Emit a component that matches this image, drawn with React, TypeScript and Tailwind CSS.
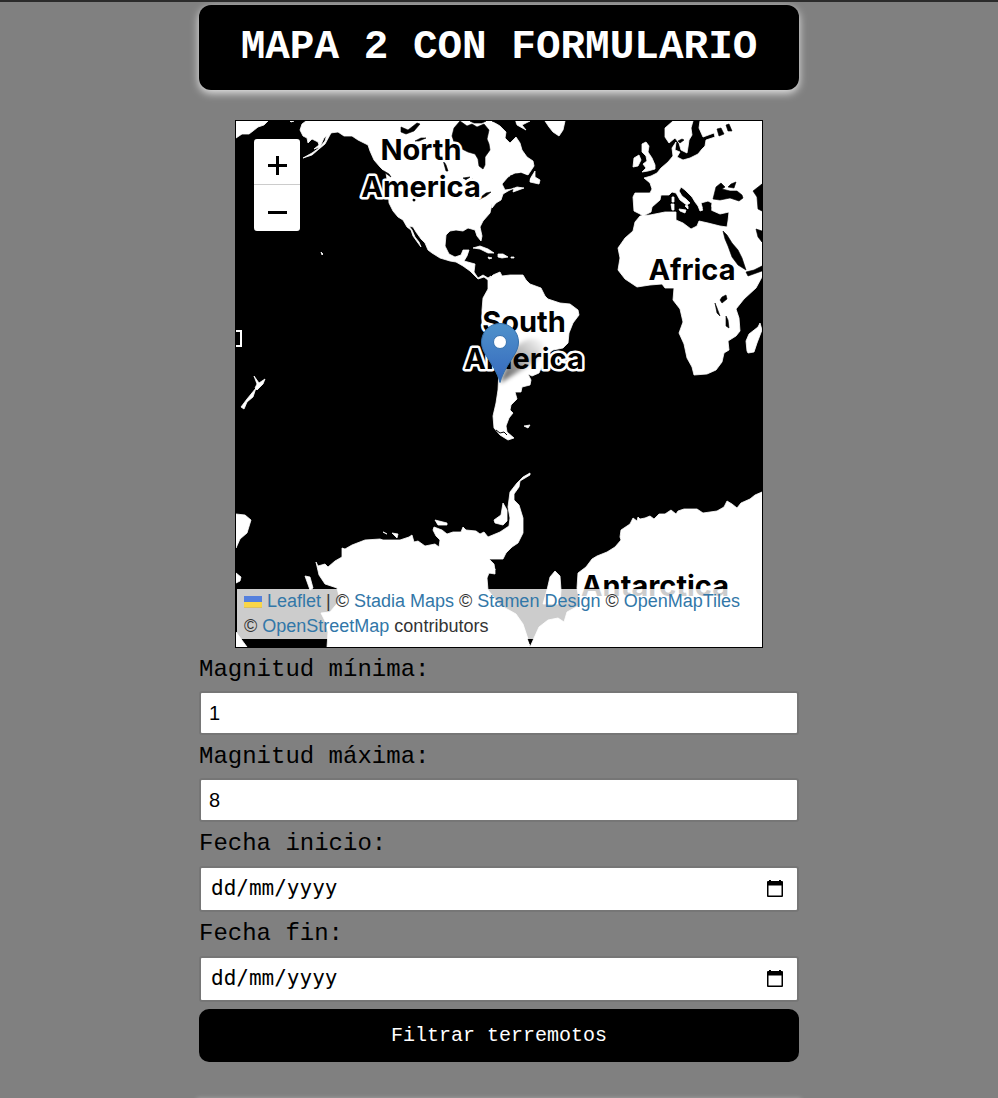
import React, { useState } from "react";

const LAND = [
  // Siberia, Alaska
  "M236 121H268L264 125 258 127 253 131 249 134 242 134 236 138Z",
  "M290 121H294L291 122Z",
  "M325 144L331 133 333 131 328 130 325 141 319 148 312 153 303 158 312 155 319 149Z",
  // North America
  "M306 121L302 124 300 130 303 136 307 138 308 143 312 139 318 142 319 145 314 149 320 147 324 138 330 133 338 132 344 136 352 136 358 140 364 143 368 145 370 151 374 160 380 167 386 173 388 185 389 203 393 211 398 217 403 220 407 227 411 230 413 236 418 243 421 247 419 242 415 237 412 230 409 226 413 227 416 232 421 239 425 243 428 250 432 253 440 258 450 261 456 262 463 266 470 271 474 275 478 279 484 277 488 280 491 276 488 278 483 275 478 278 474 272 475 264 464 261 467 256 469 250 463 250 461 255 455 257 449 254 445 246 446 235 450 231 456 230 463 231 468 228 475 230 477 236 481 241 482 236 480 227 483 221 490 213 492 204 492 208 496 203 501 200 503 194 508 191 514 188 513 192 524 188 517 187 512 189 505 190 502 184 508 177 515 173 521 173 528 175 534 166 533 161 527 157 522 150 520 143 516 137 513 140 510 143 505 138 506 132 500 126 492 121Z",
  "M530 179L535 171 535 177 540 180 539 184 530 182Z",
  "M514 121H530L522 125 526 130 517 125Z",
  "M545 121H565L563 130 559 136 553 132 549 127Z",
  // Caribbean
  "M473 248L480 246 488 249 494 253 488 253 480 249Z",
  "M498 254L503 254 508 257 502 258 498 257Z",
  "M511 257H514V258H511ZM488 257L492 258 489 259Z",
  "M321 252L323 254 322 255Z",
  // South America
  "M488 280L493 275 500 272 502 276 510 275 523 275 526 280 530 284 541 288 545 296 548 299 560 303 570 304 578 310 579 315 573 323 569 333 568 343 563 348 553 350 545 356 542 366 539 373 532 376 528 374 531 380 530 385 522 387 521 392 515 392 517 399 511 405 510 410 513 413 509 418 506 426 507 432 514 438 508 440 500 435 494 428 493 416 496 403 498 390 499 370 497 352 489 340 482 325 482 310 483 298 488 289Z",
  "M524 426L530 425 528 428Z",
  // Africa and Eurasia
  "M762 121H700L699 128 703 137 714 133 715 137 706 140 705 146 702 149 698 154 692 157 690 158 683 160 677 157 680 152 675 150 676 142 672 148 673 156 668 162 661 168 657 173 651 176 644 178 650 183 652 189 650 193 635 193 633 197 634 211 640 214 643 216 651 212 652 207 660 200 661 195 669 195 672 192 676 193 680 200 688 206 688 209 685 206 690 203 686 199 682 196 679 191 681 187 685 190 692 197 695 202 698 206 700 211 703 210 701 203 708 201 712 203 711 210 720 214 729 212 728 221 727 227 720 226 708 223 699 221 697 226 691 229 683 223 676 220 676 212 665 212 650 215 640 216 635 222 633 231 625 238 618 248 620 258 618 270 625 279 637 287 650 285 662 284 665 288 674 288 673 300 680 309 683 322 679 333 684 344 687 358 692 367 694 375 707 374 716 370 722 362 724 353 729 350 728 341 736 336 740 331 739 318 736 309 744 299 756 288 762 277Z",
  "M673 121L665 128 665 137 669 143 675 138 679 143 681 150 687 153 688 147 689 140 692 135 691 128 693 121Z",
  "M642 144L646 142 649 146 648 152 652 158 655 165 655 169 648 171 642 172 646 168 643 164 647 161 646 156 642 152Z",
  "M634 158L639 155 641 160 638 166 633 167Z",
  "M747 351L746 341 749 334 758 327 760 323 762 330 757 343 754 352 748 353Z",
  "M672 197H674V202H672ZM671 204H674V210H672ZM679 209L686 210 685 213 680 211Z",
  // New Zealand
  "M254 376L259 383 265 379 263 384 257 390 255 388 257 384Z",
  "M256 388L253 397 247 402 244 409 241 407 247 399Z",
  // Antarctica
  "M236 514L245 515 251 520 247 533 240 539 236 548Z",
  "M236 573L241 577 240 581 236 583Z",
  "M236 632L247 647H236Z",
  "M316 562L318 566 325 564 328 567 335 561 342 557 342 548 345 549 352 545 365 540 380 539 383 540 400 540 409 537 412 535 414 542 418 541 425 546 435 544 439 547 440 540 436 536 433 530 434 527 442 530 447 534 453 532 461 532 463 527 466 530 476 531 480 534 484 532 488 537 500 532 509 526 510 518 508 507 510 492 517 483 523 477 530 473 530 475 520 481 519 487 514 494 514 500 519 505 523 518 523 533 518 543 512 547 506 553 503 559 489 559 494 564 495 570 489 573 487 578 488 590 500 605 516 614 523 624 529 642 530 647H327L328 632 325 621 321 613 330 612 340 600 337 588 325 584 319 575Z",
  "M762 492L755 495 750 499 741 503 737 508 732 504 727 501 724 507 717 511 703 513 697 509 684 509 678 511 676 514 671 510 665 514 659 514 654 519 650 516 645 518 640 519 638 517 637 521 633 518 630 524 621 530 620 537 621 540 615 547 607 552 597 556 592 559 586 567 578 573 577 588 580 605 567 612 564 622 558 618 548 620 539 627 530 647H762Z",
  "M543 604L547 590 550 577 555 571 560 576 561 590 560 604Z",
  "M503 503L507 510 507 521 503 525 495 523 494 520 501 515Z",
  "M490 564L495 569 495 574 489 573Z",
  "M305 576L310 577 313 588 310 590Z",
  "M435 520L447 523 447 525 438 525ZM392 533L398 534 397 538ZM383 532L387 534Z",
];

const WATER = [
  // Hudson Bay and northern lakes
  "M460 121L454 128 452 136 455 145 462 149 468 152 475 154 478 159 479 166 483 169 485 165 485 157 490 150 489 144 487 139 489 130 484 124 477 127 472 124 467 126Z",
  "M470 121H486L482 123 474 123Z",
  "M492 121H515L517 128 508 129 502 125Z",
  "M401 127L408 130 417 123 420 124 414 131 406 134 401 132Z",
  "M415 141L421 138 426 138 419 141Z",
  "M443 160L446 165 448 171 446 171Z",
  "M463 178L470 177 466 180 472 188 475 184 473 179 468 181Z",
  "M475 198L481 197 486 193 491 192 486 196 480 199Z",
  "M381 170L391 177 389 174 384 171ZM413 199H415V201H413Z",
  "M510 176L521 173 530 177 527 186 519 186 515 181Z",
  // Black Sea, Azov, Caspian
  "M713 199L716 187 721 183 725 187 722 189 730 191 737 191 742 195 743 198 739 201 730 198 720 200Z",
  "M728 187L731 184 736 182 734 188Z",
  "M753 191L762 184V211L758 209 757 197Z",
  "M717 129L721 128 724 134 719 136ZM726 125L729 124 732 131 728 131Z",
  "M703 208L708 202 711 207 711 213 704 212Z",
  // Red Sea and gulfs
  "M723 231L727 235 732 243 738 250 742 258 746 270 738 265 732 257 728 246 725 239Z",
  "M746 272L754 270 762 266V271L748 276Z",
  "M756 229L762 231V242L758 237Z",
  // African lakes
  "M722 297L726 295 727 299 722 303 720 300ZM715 303L717 308 720 316 717 313ZM726 316L728 320 729 328 726 326Z",
  // Scandinavian lakes, polar inlet
  "M678 141L682 139 684 140 680 143ZM528 639H531L530 644Z",
];

const MAP_LABELS = [
  { text: "North", x: 421, y: 160 },
  { text: "America", x: 421, y: 197 },
  { text: "Africa", x: 692, y: 280 },
  { text: "South", x: 524, y: 332 },
  { text: "America", x: 524, y: 369 },
  { text: "Antarctica", x: 655, y: 596 },
];

function WorldMap() {
  return (
    <svg viewBox="236 121 526 526" className="block h-auto w-full bg-black" role="img" aria-label="Mapa del mundo">
      <defs>
        <linearGradient id="pin" x1="0" y1="0" x2="0" y2="1">
          <stop offset="0" stopColor="#4f92cb" />
          <stop offset="1" stopColor="#3568bd" />
        </linearGradient>
        <linearGradient id="shade" x1="0" y1="1" x2="1" y2="0">
          <stop offset="0" stopColor="#000" stopOpacity="0.65" />
          <stop offset="1" stopColor="#000" stopOpacity="0" />
        </linearGradient>
        <filter id="soft" x="-30%" y="-30%" width="160%" height="160%">
          <feGaussianBlur stdDeviation="2" />
        </filter>
      </defs>
      <g fill="#fff" stroke="#fff" strokeWidth="0.8" strokeLinejoin="round">
        {LAND.map((d) => (
          <path key={d} d={d} />
        ))}
      </g>
      <g fill="#000" stroke="#000" strokeWidth="0.6" strokeLinejoin="round">
        {WATER.map((d) => (
          <path key={d} d={d} />
        ))}
      </g>
      <path d="M496 430L500 433 504 432 507 435" fill="none" stroke="#000" />
      <path d="M236 331H241V346H236" fill="none" stroke="#fff" strokeWidth="2" />
      <g
        className="font-['Inter',sans-serif] text-[29px] font-bold"
        textAnchor="middle"
        fill="#000"
        stroke="#fff"
        strokeWidth="5"
        strokeLinejoin="round"
        paintOrder="stroke"
      >
        {MAP_LABELS.map((l) => (
          <text key={l.text + l.y} x={l.x} y={l.y}>
            {l.text}
          </text>
        ))}
      </g>
      <path d="M500 383L512 350Q530 332 543 342 546 354 528 366Z" fill="url(#shade)" filter="url(#soft)" />
      <path
        d="M500 382.500C497 372 492 365 487 357 484 352 481.500 348 481.500 342A18.500 18.500 0 0 1 518.500 342C518.500 348 516 352 513 357 508 365 503 372 500 382.500Z"
        fill="url(#pin)"
        stroke="#3470ab"
        strokeWidth="1"
      />
      <circle cx="500" cy="342" r="6.500" fill="#fff" stroke="#3873ae" />
    </svg>
  );
}

function MapLink({ href, children }: { href: string; children: React.ReactNode }) {
  return (
    <a href={href} className="text-[#3277a8]">
      {children}
    </a>
  );
}

function MapPanel() {
  return (
    <section className="relative mx-9 mt-[30px] border border-black">
      <WorldMap />
      <div className="absolute top-[18px] left-[18px] flex w-[46px] flex-col overflow-hidden rounded-[3px] bg-white">
        <button type="button" aria-label="Acercar" className="flex h-[46px] items-center justify-center border-b border-[#ccc]">
          <svg viewBox="0 0 19 19" className="mt-2 size-[19px]" stroke="#000" strokeWidth="3">
            <path d="M0 9.500H19M9.500 0V19" />
          </svg>
        </button>
        <button type="button" aria-label="Alejar" className="flex h-[46px] items-center justify-center">
          <svg viewBox="0 0 19 19" className="mt-2 size-[19px]" stroke="#000" strokeWidth="3">
            <path d="M0 9.500H19" />
          </svg>
        </button>
      </div>
      <div className="absolute right-0 bottom-2 left-px bg-white/80 px-[7px] font-['Liberation_Sans',sans-serif] text-[18px] leading-[25px] text-[#333]">
        <MapLink href="https://leafletjs.com">
          <svg viewBox="0 0 18 12" className="mr-[5px] inline h-3 w-[18px] align-[-1px]" aria-hidden="true">
            <path fill="#5580dd" d="M0 0h18v6H0z" />
            <path fill="#f9d648" d="M0 6h18v5H0z" />
            <path fill="#dcc060" d="M0 11h18v1H0z" />
          </svg>
          Leaflet
        </MapLink>{" "}
        | © <MapLink href="https://stadiamaps.com/">Stadia Maps</MapLink> ©{" "}
        <MapLink href="https://stamen.com/">Stamen Design</MapLink> ©{" "}
        <MapLink href="https://openmaptiles.org/">OpenMapTiles</MapLink> ©{" "}
        <MapLink href="https://www.openstreetmap.org/copyright">OpenStreetMap</MapLink> contributors
      </div>
    </section>
  );
}

function NumberField({ id, label, initial }: { id: string; label: string; initial: string }) {
  const [value, setValue] = useState(initial);
  return (
    <div className="flex flex-col">
      <label htmlFor={id} className="leading-[43px]">
        {label}
      </label>
      <input
        id={id}
        inputMode="decimal"
        value={value}
        onChange={(e) => setValue(e.target.value)}
        className="h-11 rounded-[3px] border-2 border-[#767676] bg-white px-2 font-['Liberation_Sans',sans-serif] text-[20px] text-black"
      />
    </div>
  );
}

function DateField({ id, label }: { id: string; label: string }) {
  const [value, setValue] = useState("");
  return (
    <div className="flex flex-col">
      <label htmlFor={id} className="leading-[44px]">
        {label}
      </label>
      <div className="flex h-[46px] items-center rounded-[3px] border-2 border-[#767676] bg-white pr-[13px] pl-[10px]">
        <input
          id={id}
          value={value}
          placeholder="dd/mm/yyyy"
          onChange={(e) => setValue(e.target.value)}
          className="min-w-0 flex-1 font-['DejaVu_Sans_Mono',monospace] text-[21px] text-black outline-none placeholder:text-black"
        />
        <button type="button" aria-label={`Abrir calendario: ${label}`}>
          <svg viewBox="0 0 18 18" className="size-[18px]">
            <path d="M3 0h2v1h8V0h2v1h1q1 0 1 1v14q0 1-1 1H2q-1 0-1-1V2q0-1 1-1h1zM2.500 5.500V15.500h13V5.500z" fill="#000" fillRule="evenodd" />
          </svg>
        </button>
      </div>
    </div>
  );
}

export default function App() {
  return (
    <div className="min-h-screen overflow-hidden border-t-2 border-[#2b2b2b] bg-[#808080] font-['Liberation_Mono',monospace] text-[24px] text-black">
      <main className="mx-auto max-w-[600px] pt-[3px]">
        <h1 className="rounded-xl bg-black text-center text-[41px] leading-[85px] font-bold text-white shadow-[0_3px_9px_rgba(255,255,255,0.8)]">
          MAPA 2 CON FORMULARIO
        </h1>
        <MapPanel />
        <form onSubmit={(e) => e.preventDefault()}>
          <NumberField id="min" label="Magnitud mínima:" initial="1" />
          <NumberField id="max" label="Magnitud máxima:" initial="8" />
          <DateField id="start" label="Fecha inicio:" />
          <DateField id="end" label="Fecha fin:" />
          <button type="submit" className="mt-[7px] h-[53px] w-full rounded-[10px] bg-black text-[20px] text-white">
            Filtrar terremotos
          </button>
        </form>
        <div className="mt-9 h-0 rounded-xl shadow-[0_2px_4px_2px_rgba(255,255,255,0.3)]" />
      </main>
    </div>
  );
}
